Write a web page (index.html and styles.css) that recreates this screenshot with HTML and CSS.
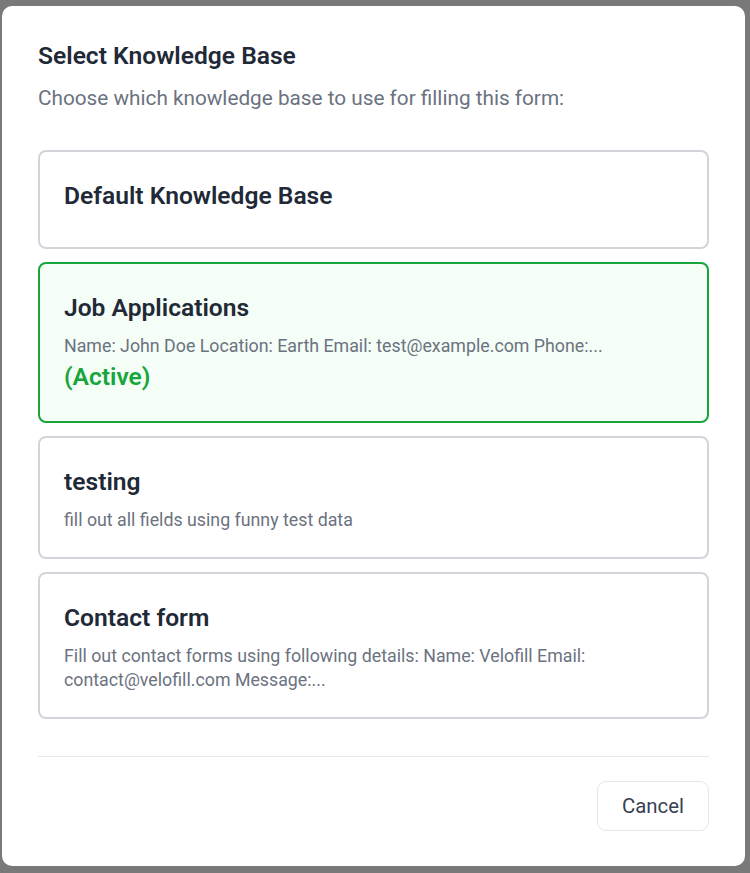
FILE: index.html
```html
<!DOCTYPE html>
<html lang="en">
<head>
<meta charset="utf-8">
<title>Select Knowledge Base</title>
<link rel="stylesheet" href="styles.css">
</head>
<body>
<div class="overlay">
  <div class="modal" role="dialog" aria-labelledby="kb-title">
    <h2 class="modal-title" id="kb-title">Select Knowledge Base</h2>
    <p class="modal-subtitle">Choose which knowledge base to use for filling this form:</p>
    <div class="kb-list">
      <button class="kb-card" type="button">
        <span class="kb-name">Default Knowledge Base</span>
      </button>
      <button class="kb-card kb-card--active" type="button">
        <span class="kb-name">Job Applications</span>
        <span class="kb-desc">Name: John Doe Location: Earth Email: test@example.com Phone:...</span>
        <span class="kb-status">(Active)</span>
      </button>
      <button class="kb-card" type="button">
        <span class="kb-name">testing</span>
        <span class="kb-desc">fill out all fields using funny test data</span>
      </button>
      <button class="kb-card" type="button">
        <span class="kb-name">Contact form</span>
        <span class="kb-desc">Fill out contact forms using following details: Name: Velofill Email: contact@velofill.com Message:...</span>
      </button>
    </div>
    <div class="modal-footer">
      <button class="btn-cancel" type="button">Cancel</button>
    </div>
  </div>
</div>
</body>
</html>
```

FILE: styles.css
```css
* {
  box-sizing: border-box;
}

html, body {
  margin: 0;
  padding: 0;
}

body {
  width: 750px;
  height: 873px;
  overflow: hidden;
  background: #797979;
  font-family: Roboto, "Noto Sans", "Liberation Sans", sans-serif;
}

.overlay {
  padding: 6px 5px 0 2px;
}

.modal {
  width: 743px;
  background: #ffffff;
  border-radius: 10px;
  padding: 32px 36px 35px;
}

.modal-title {
  margin: 0 0 9px;
  font-size: 24.6px;
  line-height: 36px;
  font-weight: 600;
  color: #1f2937;
}

.modal-subtitle {
  margin: 0 0 37px;
  font-size: 20.75px;
  line-height: 30px;
  color: #6b7280;
}

.kb-list {
  display: flex;
  flex-direction: column;
  gap: 13px;
}

.kb-card {
  display: flex;
  flex-direction: column;
  align-items: flex-start;
  width: 100%;
  margin: 0;
  padding: 26px 24px 25px;
  text-align: left;
  font-family: inherit;
  background: #ffffff;
  border: 2px solid #d1d5db;
  border-radius: 8px;
  cursor: pointer;
}

.kb-card--active {
  background: #f4fdf6;
  border-color: #18a63c;
}

.kb-name {
  display: block;
  margin-bottom: 8px;
  font-size: 24.6px;
  line-height: 36px;
  font-weight: 600;
  color: #1f2937;
}

.kb-desc {
  display: block;
  font-size: 17.8px;
  line-height: 24px;
  color: #6b7280;
}

.kb-status {
  display: block;
  font-size: 24.6px;
  line-height: 38px;
  font-weight: 600;
  color: #18a63c;
}

.modal-footer {
  display: flex;
  justify-content: flex-end;
  margin-top: 37px;
  padding-top: 24px;
  border-top: 1px solid #e5e7eb;
}

.btn-cancel {
  padding: 12px 24px;
  font-family: inherit;
  font-size: 20.4px;
  line-height: 24px;
  color: #374151;
  background: #ffffff;
  border: 1px solid #e5e7eb;
  border-radius: 9px;
  cursor: pointer;
}
```
